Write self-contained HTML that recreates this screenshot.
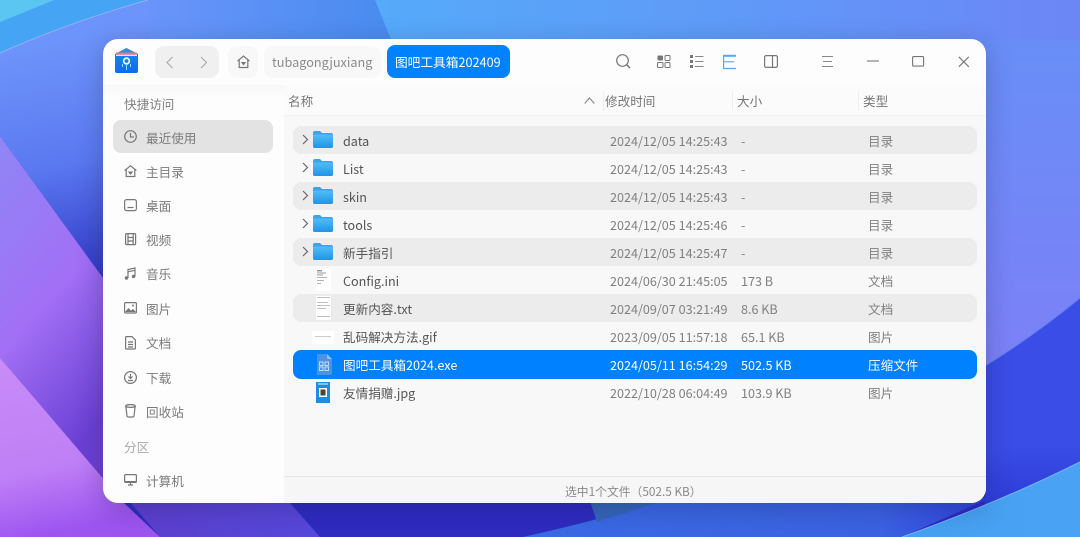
<!DOCTYPE html>
<html><head><meta charset="utf-8"><style>
*{margin:0;padding:0;box-sizing:border-box}
html,body{width:1080px;height:537px;overflow:hidden}
body{position:relative;font-family:"Noto Sans CJK SC","Liberation Sans",sans-serif;font-size:12.6px;color:#555;filter:blur(.3px)}
.a,.t{position:absolute}
.t{white-space:nowrap;line-height:18px}
svg{position:absolute;overflow:visible}
.s{color:#7a7a7a;left:146px}
.c{color:#777;font-size:12.6px}
.r{position:absolute;left:293px;width:684px;height:28px;border-radius:8px;background:#ececec}
.i{fill:none;stroke:#777;stroke-width:1.2}
.n{left:343px;color:#555}
.d{left:610px;color:#808080}
.z{left:741px;color:#808080}
.y{left:868px;color:#808080}
.w{color:#fff!important}
</style></head><body>
<svg style="left:0;top:0" width="1080" height="537" viewBox="0 0 1080 537">
<defs>
<linearGradient id="g2" x1="0" y1="0" x2="1" y2="0"><stop offset="0" stop-color="#55aafa"/><stop offset=".5" stop-color="#5f9af8"/><stop offset="1" stop-color="#6c86f6"/></linearGradient>
<linearGradient id="g3" gradientUnits="userSpaceOnUse" x1="60" y1="40" x2="110" y2="280"><stop offset="0" stop-color="#6d94fa"/><stop offset=".5" stop-color="#5a78f0"/><stop offset="1" stop-color="#2f35c4"/></linearGradient>
<linearGradient id="g3b" gradientUnits="userSpaceOnUse" x1="110" y1="0" x2="380" y2="0"><stop offset="0" stop-color="#6f96fb"/><stop offset="1" stop-color="#4a8cf0"/></linearGradient>
<linearGradient id="g4" x1="0" y1="0" x2=".35" y2="1"><stop offset="0" stop-color="#8f86f6"/><stop offset=".55" stop-color="#a26ff5"/><stop offset="1" stop-color="#6a40d4"/></linearGradient>
<linearGradient id="g5" x1="0" y1="0" x2=".2" y2="1"><stop offset="0" stop-color="#c88cf7"/><stop offset=".65" stop-color="#bf7ff6"/><stop offset="1" stop-color="#9d55f0"/></linearGradient>
<linearGradient id="g6" x1="0" y1="0" x2="0" y2="1"><stop offset="0" stop-color="#688ef6"/><stop offset="1" stop-color="#7d80f7"/></linearGradient>
<linearGradient id="g7" gradientUnits="userSpaceOnUse" x1="523" y1="0" x2="1000" y2="0"><stop offset="0" stop-color="#3a6be4"/><stop offset=".75" stop-color="#3b62e2"/><stop offset="1" stop-color="#2f3edb"/></linearGradient>
<linearGradient id="g8" x1="0" y1="0" x2="1" y2="0"><stop offset="0" stop-color="#5c3fcc"/><stop offset="1" stop-color="#5748dc"/></linearGradient>
<linearGradient id="g9" x1="0" y1="0" x2="0" y2="1"><stop offset="0" stop-color="#3a4de6"/><stop offset=".7" stop-color="#3a4de6"/><stop offset="1" stop-color="#2c3ad6"/></linearGradient>
<linearGradient id="g10" x1="0" y1="0" x2="1" y2="0"><stop offset="0" stop-color="#46a0f0"/><stop offset="1" stop-color="#4aa2f4"/></linearGradient>
</defs>
<rect width="1080" height="537" fill="#2e2bc0"/>
<!-- top light area -->
<rect x="375" y="0" width="705" height="120" fill="url(#g2)"/>
<rect x="980" y="40" width="100" height="330" fill="url(#g6)"/>
<!-- top-left main -->
<path d="M148 0 L375 0 L392 42 L392 300 L103 300 L103 0Z" fill="url(#g3b)"/>
<polygon points="0,0 150,0 0,53" fill="#46a4f4"/>
<path d="M0 53 Q70 22 148 0 L150 0 L150 300 L103 278 L0 136Z" fill="url(#g3)"/>
<path d="M0 53 Q70 22 148 0" fill="none" stroke="#8ab4fa" stroke-width="1"/>
<path d="M0 22 Q25 12 54 0 L0 0Z" fill="#5cc6f2"/>
<polygon points="0,136 103,278 110,490 0,358" fill="url(#g4)"/>
<polygon points="0,358 124,503 160,537 0,537" fill="url(#g5)"/>
<polygon points="124,495 283,495 320,537 160,537" fill="url(#g8)"/>
<!-- right lower -->
<path d="M985 366 Q1035 335 1080 298 L1080 470 L985 510Z" fill="url(#g9)"/>
<path d="M985 366 Q1035 335 1080 298" fill="none" stroke="#5f80ee" stroke-width="1"/>
<!-- bottom band -->
<path d="M523 537 Q600 520 671 498 L990 498 L902 537Z" fill="url(#g7)"/>
<polygon points="589,498 671,498 597,522" fill="#3566b8"/>
<path d="M902 537 Q1000 502 1080 462 L1080 537Z" fill="url(#g10)"/>
<path d="M902 537 Q1000 502 1080 462" fill="none" stroke="#75b6f6" stroke-width="1"/>
</svg>

<div class="a" style="left:103px;top:39px;width:883px;height:464px;border-radius:15px;background:#fdfdfd;overflow:hidden;box-shadow:0 6px 26px rgba(20,20,70,.25)">
<div class="a" style="left:181px;top:46px;width:702px;height:30px;background:#fbfbfb"></div>
<div class="a" style="left:0;top:46px;width:181px;height:12px;background:linear-gradient(#f8f8f8,#fdfdfd)"></div>
<div class="a" style="left:181px;top:76px;width:702px;height:1px;background:#f1f1f1"></div>
<div class="a" style="left:181px;top:77px;width:702px;height:360px;background:#f8f8f8"></div>
<div class="a" style="left:181px;top:437px;width:702px;height:27px;background:#f6f6f6;border-top:1px solid #e6e6e6"></div>
<div class="a" style="left:500px;top:52px;width:1px;height:20px;background:#eee"></div>
<div class="a" style="left:629px;top:52px;width:1px;height:20px;background:#eee"></div>
<div class="a" style="left:755px;top:52px;width:1px;height:20px;background:#eee"></div>
</div>

<!-- App icon -->
<svg style="left:114px;top:47px" width="25" height="27" viewBox="0 0 25 27">
<defs><linearGradient id="ap" x1="0" y1="0" x2="0" y2="1"><stop offset="0" stop-color="#1b8ae8"/><stop offset="1" stop-color="#0d6cf0"/></linearGradient></defs>
<path d="M1 7 L12.500 1 L24 7 V24 Q24 26 22 26 H3 Q1 26 1 24Z" fill="url(#ap)"/>
<path d="M2.500 6 L12.500 1.500 L22.500 6Z" fill="#2f8fd8"/>
<rect x="2" y="5.500" width="21" height="2.200" fill="#f2708c"/>
<rect x="2" y="7.700" width="21" height="1.200" fill="#e8eef8"/>
<circle cx="12.500" cy="14" r="2.800" fill="none" stroke="#dff" stroke-width="1.800"/>
<path d="M12.500 17v6M8.500 17v3M16.500 17v3" stroke="#8fdcff" stroke-width="1"/>
</svg>

<!-- nav -->
<div class="a" style="left:155px;top:46px;width:64px;height:32px;border-radius:9px;background:#f0f0f0"></div>
<svg style="left:165px;top:56px" width="10" height="13" fill="none" stroke="#aaa" stroke-width="1.2"><path d="M7.500 1 L2 6.500 L7.500 12"/></svg>
<svg style="left:199px;top:56px" width="10" height="13" fill="none" stroke="#aaa" stroke-width="1.2"><path d="M2 1 L7.500 6.500 L2 12"/></svg>
<div class="a" style="left:228px;top:46px;width:30px;height:32px;border-radius:9px;background:#f8f8f8"></div>
<svg style="left:237px;top:55px" width="13" height="14" fill="none" stroke="#777" stroke-width="1.200"><path d="M.6 6 L6.500 1 L12.400 6 M2.200 5 V12.500 H10.800 V5"/><path d="M3.800 7 H9.200 L6.500 10.500Z" fill="#777" stroke="none"/></svg>
<div class="a" style="left:264px;top:46px;width:117px;height:32px;border-radius:9px;background:#f8f8f8"></div>
<div class="t" style="left:272px;top:53px;color:#8a8a8a;font-size:12.700px">tubagongjuxiang</div>
<div class="a" style="left:387px;top:45px;width:123px;height:33px;border-radius:8px;background:#0081ff"></div>
<div class="t w" style="left:395px;top:53px;font-size:12.700px">图吧工具箱202409</div>

<!-- toolbar icons -->
<svg style="left:615px;top:53px" width="17" height="17" fill="none" stroke="#777" stroke-width="1.200"><circle cx="7.500" cy="7.500" r="5.800"/><path d="M11.800 11.800 L15 15" stroke-width="1.500"/></svg>
<svg style="left:657px;top:55px" width="14" height="13"><rect x=".5" y=".5" width="5.500" height="5" rx="1" fill="#777"/><g fill="none" stroke="#777"><rect x="8" y=".5" width="5" height="5" rx="1"/><rect x=".5" y="7.500" width="5.500" height="5" rx="1"/><rect x="8" y="7.500" width="5" height="5" rx="1"/></g></svg>
<svg style="left:690px;top:55px" width="14" height="13"><path d="M0 0h3v3H0zM0 5h3v3H0zM0 10h3v3H0z" fill="#777"/><path d="M5 1.500h8.500M5 6.500h8.500M5 11.500h8.500" stroke="#888" stroke-width="1"/></svg>
<svg style="left:723px;top:55px" width="14" height="14" fill="none" stroke="#56a9f6" stroke-width="1.200"><path d="M.6 0V13.500H13M.6 6.800H11"/><path d="M0 .8H13" stroke-width="2"/></svg>
<svg style="left:764px;top:55px" width="14" height="13" fill="none" stroke="#777" stroke-width="1.200"><rect x=".6" y=".6" width="12.800" height="11.800" rx="1.500"/><path d="M8.500 .6V12.400"/></svg>
<svg style="left:822px;top:56px" width="12" height="12" stroke="#888" stroke-width="1"><path d="M0 .5H11M1 5.500H10M0 10.500H11"/></svg>
<svg style="left:867px;top:60px" width="13" height="3" stroke="#777" stroke-width="1.100"><path d="M0 1H12"/></svg>
<svg style="left:912px;top:56px" width="13" height="11" fill="none" stroke="#777" stroke-width="1.100"><rect x=".6" y=".6" width="11" height="9.500" rx="1"/></svg>
<svg style="left:958px;top:56px" width="12" height="12" stroke="#777" stroke-width="1.100"><path d="M.8 .8L10.800 10.800M10.800 .8L.8 10.800"/></svg>

<!-- sidebar -->
<div class="t" style="left:124px;top:95px;color:#808080">快捷访问</div>
<div class="a" style="left:113px;top:120px;width:160px;height:33px;border-radius:8px;background:#e3e3e3"></div>
<svg style="left:124px;top:130px" width="14" height="14" class="i"><circle cx="6.500" cy="6.500" r="5.800"/><path d="M6.500 3V7H10"/></svg>
<div class="t s" style="top:129px">最近使用</div>
<svg style="left:124px;top:165px" width="13" height="13" class="i"><path d="M.6 5.500L6.500 .8L12.400 5.500M2.200 4.500V11.500H10.800V4.500"/><path d="M3.800 6.500H9.200L6.500 10Z" fill="#777" stroke="none"/></svg>
<div class="t s" style="top:163px">主目录</div>
<svg style="left:124px;top:199px" width="13" height="13" class="i"><rect x=".6" y=".6" width="11.800" height="11" rx="2"/><path d="M3.500 8.500H9.500"/></svg>
<div class="t s" style="top:197px">桌面</div>
<svg style="left:125px;top:233px" width="11" height="13" class="i"><rect x=".6" y=".6" width="10" height="11" rx="1"/><path d="M3 .6V11.600M8.200 .6V11.600M3 4.500H8.200M3 8H8.200"/></svg>
<div class="t s" style="top:231px">视频</div>
<svg style="left:124px;top:267px" width="13" height="14" class="i"><path d="M4 11V2.500L11 1V9.500M4 4.800L11 3.300"/><circle cx="2.500" cy="11" r="1.700" fill="#777" stroke="none"/><circle cx="9.500" cy="9.500" r="1.700" fill="#777" stroke="none"/></svg>
<div class="t s" style="top:265px">音乐</div>
<svg style="left:124px;top:302px" width="13" height="12" class="i"><rect x=".6" y=".6" width="11.800" height="10.400" rx="1"/><path d="M1 10L4.500 6L7 8.500L9 7L12 10Z" fill="#777" stroke="none"/><circle cx="9" cy="3.500" r="1" fill="#777" stroke="none"/></svg>
<div class="t s" style="top:300px">图片</div>
<svg style="left:125px;top:336px" width="11" height="14" class="i"><path d="M1.500 .6H7L10.400 4V12.400Q10.400 13 9.800 13H1.500Q.6 13 .6 12.400V1.500Q.6 .6 1.500 .6ZM3 6H8M3 8.500H8M3 11H8"/></svg>
<div class="t s" style="top:334px">文档</div>
<svg style="left:124px;top:371px" width="13" height="13" class="i"><circle cx="6.500" cy="6.500" r="5.900"/><path d="M6.500 3V7.500M4.500 5.500L6.500 7.500L8.500 5.500M4 9.500H9"/></svg>
<div class="t s" style="top:369px">下载</div>
<svg style="left:125px;top:404px" width="11" height="14" class="i"><ellipse cx="5.500" cy="2" rx="4.800" ry="1.400"/><path d="M.8 2L2 12Q2.200 13 3.500 13H7.500Q8.800 13 9 12L10.200 2"/></svg>
<div class="t s" style="top:403px">回收站</div>
<div class="t" style="left:124px;top:438px;color:#a8a8a8">分区</div>
<svg style="left:124px;top:474px" width="13" height="12" class="i"><rect x=".6" y=".6" width="11.800" height="7.800" rx="1" fill="none"/><rect x=".6" y="7" width="11.800" height="1.600" fill="#777" stroke="none"/><path d="M4 11H9M6.500 8.500V11"/></svg>
<div class="t s" style="top:472px">计算机</div>

<!-- headers -->
<div class="t c" style="left:288px;top:92px">名称</div>
<svg style="left:584px;top:97px" width="11" height="8" fill="none" stroke="#888" stroke-width="1.100"><path d="M.7 6.500L5.500 1L10.300 6.500"/></svg>
<div class="t c" style="left:605px;top:92px">修改时间</div>
<div class="t c" style="left:737px;top:92px">大小</div>
<div class="t c" style="left:863px;top:92px">类型</div>

<!-- rows -->
<div class="r" style="top:126px"></div>
<div class="r" style="top:182px"></div>
<div class="r" style="top:238px"></div>
<div class="r" style="top:294px"></div>
<div class="r" style="top:350px;height:29px;background:#0081ff"></div>

<svg width="0" height="0" style="left:0;top:0"><defs>
<linearGradient id="fd" x1="0" y1="0" x2="0" y2="1"><stop offset="0" stop-color="#52bdf6"/><stop offset="1" stop-color="#1f94e8"/></linearGradient>
<symbol id="fo" viewBox="0 0 20 17"><path d="M0 2Q0 0 2 0H7L9 2H18Q20 2 20 4V15Q20 17 18 17H2Q0 17 0 15Z" fill="#3ca5ea"/><path d="M0 5Q0 3.500 2 3.500H18Q20 3.500 20 5V15Q20 17 18 17H2Q0 17 0 15Z" fill="url(#fd)"/></symbol>
<symbol id="ch" viewBox="0 0 7 11"><path d="M1 1L5.500 5.500L1 10" fill="none" stroke="#666" stroke-width="1.200"/></symbol>
</defs></svg>

<svg style="left:302px;top:134px" width="7" height="11"><use href="#ch"/></svg><svg style="left:313px;top:131px" width="20" height="17"><use href="#fo"/></svg>
<svg style="left:302px;top:162px" width="7" height="11"><use href="#ch"/></svg><svg style="left:313px;top:159px" width="20" height="17"><use href="#fo"/></svg>
<svg style="left:302px;top:190px" width="7" height="11"><use href="#ch"/></svg><svg style="left:313px;top:187px" width="20" height="17"><use href="#fo"/></svg>
<svg style="left:302px;top:218px" width="7" height="11"><use href="#ch"/></svg><svg style="left:313px;top:215px" width="20" height="17"><use href="#fo"/></svg>
<svg style="left:302px;top:246px" width="7" height="11"><use href="#ch"/></svg><svg style="left:313px;top:243px" width="20" height="17"><use href="#fo"/></svg>

<!-- file thumbs -->
<svg style="left:316px;top:269px" width="16" height="22"><rect width="15" height="22" fill="#fff"/><path d="M1 1h5v1.500H1zM1 3.500h9v1H1zM1 5.500h6v1H1zM1 8h10v.800H1zM1 11h7v.800H1zM1 14h4v.800H1z" fill="#999"/></svg>
<svg style="left:316px;top:296px" width="16" height="24"><rect width="15" height="24" fill="#fff"/><path d="M1 1h13v.800H1zM1 6h11v.800H1zM1 9h13v.800H1zM1 12h9v.800H1zM1 20h13v.800H1z" fill="#aaa"/></svg>
<svg style="left:312px;top:331px" width="22" height="13"><rect width="22" height="13" fill="#fff"/><path d="M3 5h16v1H3z" fill="#ccc"/></svg>
<svg style="left:316px;top:354px" width="16" height="21"><path d="M1 0H11L16 5V19Q16 21 14 21H1Z" fill="#4c92e6"/><path d="M11 0L16 5H12Q11 5 11 4Z" fill="#8fbef0"/><g fill="none" stroke="#cfe5fb" stroke-width=".9"><rect x="3.500" y="8" width="3.500" height="3.500"/><rect x="9" y="8" width="3.500" height="3.500"/><rect x="3.500" y="13" width="3.500" height="3.500"/><rect x="9" y="13" width="3.500" height="3.500"/></g></svg>
<svg style="left:316px;top:382px" width="14" height="21"><rect width="14" height="21" fill="#1d8ee0"/><rect x="3" y="6" width="8" height="9" fill="#fff"/><rect x="4.500" y="7.500" width="5" height="6" fill="#444"/><rect x="2" y="1" width="10" height="2" fill="#7cc4f2"/></svg>

<div class="t n" style="top:132px">data</div><div class="t d" style="top:132px">2024/12/05 14:25:43</div><div class="t z" style="top:132px">-</div><div class="t y" style="top:132px">目录</div>
<div class="t n" style="top:160px">List</div><div class="t d" style="top:160px">2024/12/05 14:25:43</div><div class="t z" style="top:160px">-</div><div class="t y" style="top:160px">目录</div>
<div class="t n" style="top:188px">skin</div><div class="t d" style="top:188px">2024/12/05 14:25:43</div><div class="t z" style="top:188px">-</div><div class="t y" style="top:188px">目录</div>
<div class="t n" style="top:216px">tools</div><div class="t d" style="top:216px">2024/12/05 14:25:46</div><div class="t z" style="top:216px">-</div><div class="t y" style="top:216px">目录</div>
<div class="t n" style="top:244px">新手指引</div><div class="t d" style="top:244px">2024/12/05 14:25:47</div><div class="t z" style="top:244px">-</div><div class="t y" style="top:244px">目录</div>
<div class="t n" style="top:272px">Config.ini</div><div class="t d" style="top:272px">2024/06/30 21:45:05</div><div class="t z" style="top:272px">173 B</div><div class="t y" style="top:272px">文档</div>
<div class="t n" style="top:300px">更新内容.txt</div><div class="t d" style="top:300px">2024/09/07 03:21:49</div><div class="t z" style="top:300px">8.6 KB</div><div class="t y" style="top:300px">文档</div>
<div class="t n" style="top:328px">乱码解决方法.gif</div><div class="t d" style="top:328px">2023/09/05 11:57:18</div><div class="t z" style="top:328px">65.1 KB</div><div class="t y" style="top:328px">图片</div>
<div class="t n w" style="top:356px">图吧工具箱2024.exe</div><div class="t d w" style="top:356px">2024/05/11 16:54:29</div><div class="t z w" style="top:356px">502.5 KB</div><div class="t y w" style="top:356px">压缩文件</div>
<div class="t n" style="top:384px">友情捐赠.jpg</div><div class="t d" style="top:384px">2022/10/28 06:04:49</div><div class="t z" style="top:384px">103.9 KB</div><div class="t y" style="top:384px">图片</div>

<div class="t" style="left:565px;top:483px;color:#8a8a8a;font-size:11.800px">选中1个文件（502.5 KB）</div>
</body></html>
